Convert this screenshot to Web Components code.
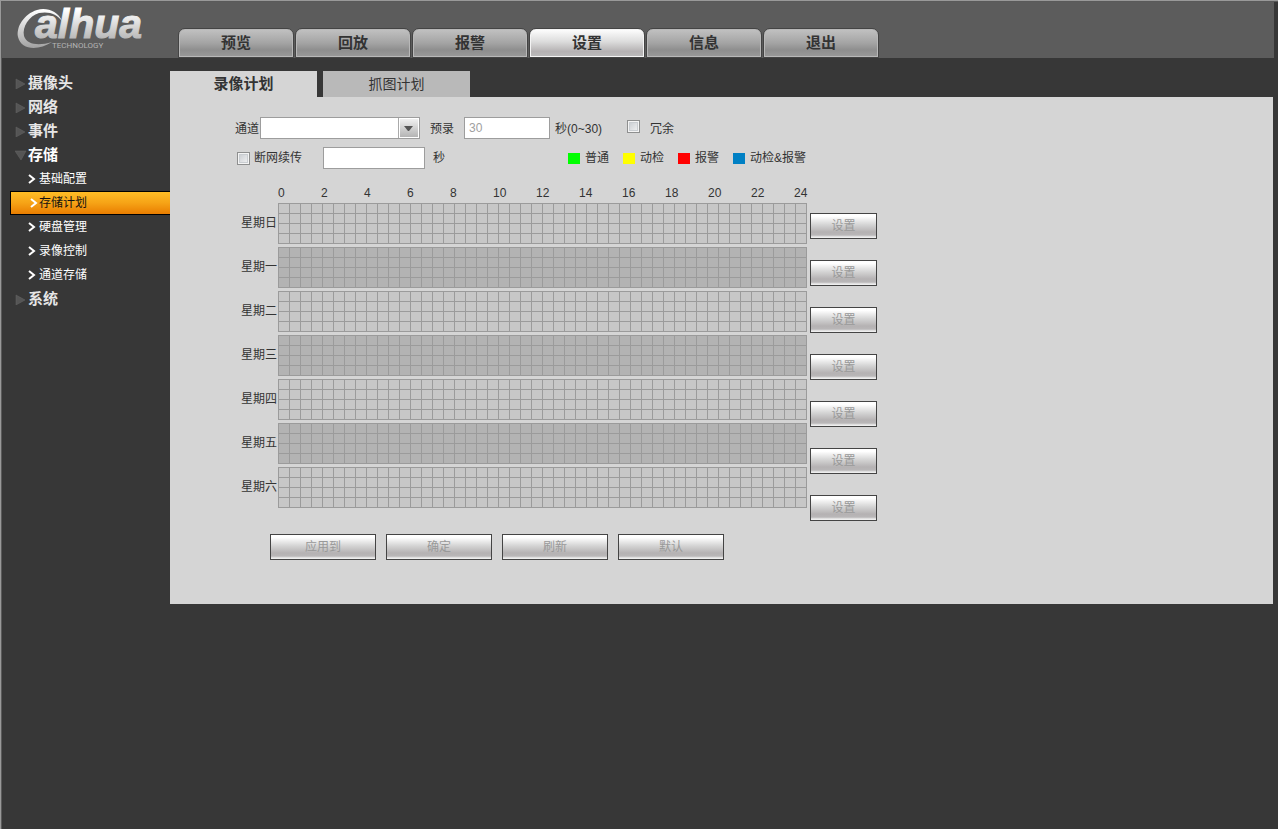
<!DOCTYPE html>
<html lang="zh-CN">
<head>
<meta charset="utf-8">
<title>存储计划</title>
<style>
  body {
    margin: 0;
    background: #fff;
    color: #333;
    font: 12px/16px "Liberation Sans", "Noto Sans CJK SC", sans-serif;
  }
</style>
</head>
<body>
<camera-app>
  <brand-logo slot="header"></brand-logo>
  <top-nav slot="header">
    <top-tab>预览</top-tab>
    <top-tab>回放</top-tab>
    <top-tab>报警</top-tab>
    <top-tab active>设置</top-tab>
    <top-tab>信息</top-tab>
    <top-tab>退出</top-tab>
  </top-nav>

  <side-menu slot="side">
    <menu-group label="摄像头"></menu-group>
    <menu-group label="网络"></menu-group>
    <menu-group label="事件"></menu-group>
    <menu-group label="存储" open>
      <menu-entry>基础配置</menu-entry>
      <menu-entry active>存储计划</menu-entry>
      <menu-entry>硬盘管理</menu-entry>
      <menu-entry>录像控制</menu-entry>
      <menu-entry>通道存储</menu-entry>
    </menu-group>
    <menu-group label="系统"></menu-group>
  </side-menu>

  <tab-panel>
    <panel-tab slot="tabs" active>录像计划</panel-tab>
    <panel-tab slot="tabs">抓图计划</panel-tab>
    <record-form></record-form>
    <week-schedule></week-schedule>
    <action-bar>
      <push-button wide>应用到</push-button>
      <push-button wide>确定</push-button>
      <push-button wide>刷新</push-button>
      <push-button wide>默认</push-button>
    </action-bar>
  </tab-panel>
</camera-app>

<script>
class CameraApp extends HTMLElement {
  constructor() {
    super();
    this.attachShadow({mode: 'open'}).innerHTML = `
      <style>
        :host {
          display: flex;
          flex-direction: column;
          box-sizing: border-box;
          min-height: calc(100vh - 2px);
          margin-right: 2px;
          border: solid #999;
          border-width: 1px 0 0 1px;
          background: #373737;
          box-shadow: inset 1px 1px #5a5a5a;
        }
        header {
          display: flex;
          align-items: flex-end;
          height: 56px;
          margin: 1px 4px 0 1px;
          background: #5c5c5c;
        }
        .body {
          display: flex;
          align-items: flex-start;
          padding: 13px 5px 0 1px;
        }
        main {
          flex: 1;
          min-width: 0;
        }
      </style>

      <header><slot name="header"></slot></header>
      <div class="body">
        <slot name="side"></slot>
        <main><slot></slot></main>
      </div>
    `;
  }
}

class BrandLogo extends HTMLElement {
  constructor() {
    super();
    this.attachShadow({mode: 'open'}).innerHTML = `
      <style>
        :host {
          display: block;
          align-self: flex-start;
          width: 176px;
        }
        svg {
          display: block;
        }
        .name {
          font: italic bold 41px "Liberation Sans", sans-serif;
        }
        .sub {
          font: 8px Roboto, "Liberation Sans", sans-serif;
        }
      </style>

      <svg width="160" height="52" viewBox="2 2 160 52" role="img" aria-label="alhua technology">
        <defs>
          <linearGradient id="metal" gradientUnits="userSpaceOnUse" x1="0" y1="10" x2="0" y2="48">
            <stop offset="0" stop-color="#fff"/>
            <stop offset="1" stop-color="#a2a2a2"/>
          </linearGradient>
        </defs>
        <g fill="url(#metal)">
          <path d="M62 21C58 11 46 7 37 10C24 14 16 27 18 37C21 50 38 51 52 42C39 46 27 45 24 36C22 27 29 16 39 13C49 11 57 14 62 21Z"/>
          <text class="name" x="35" y="38" stroke="url(#metal)">alhua</text>
        </g>
        <text class="sub" x="52" y="48" fill="#b4b4b4">TECHNOLOGY</text>
      </svg>
    `;
  }
}

class TopNav extends HTMLElement {
  constructor() {
    super();
    this.attachShadow({mode: 'open'}).innerHTML = `
      <style>
        :host {
          display: block;
        }
        nav {
          display: flex;
          gap: 1px;
        }
      </style>

      <nav><slot></slot></nav>
    `;
  }
}

class TopTab extends HTMLElement {
  constructor() {
    super();
    this.attachShadow({mode: 'open'}).innerHTML = `
      <style>
        :host {
          display: block;
        }
        a {
          display: block;
          box-sizing: border-box;
          width: 116px;
          height: 30px;
          border: 1px solid #444;
          border-radius: 7px 7px 0 0;
          background: linear-gradient(#c2c2c2, #a4a4a4 50%, #8e8e8e 75%, #999);
          box-shadow: inset 0 0 0 1px #b8b8b8;
          color: #333;
          font-size: 15px;
          font-weight: bold;
          line-height: 27px;
          text-align: center;
          text-decoration: none;
        }
        :host([active]) a {
          background: linear-gradient(#fff, #dcdcdc 45%, #b5b2b3 80%, #bbb);
          box-shadow: inset 0 0 0 1px #f4f4f4;
        }
      </style>

      <a href="#"><slot></slot></a>
    `;
  }
}

class SideMenu extends HTMLElement {
  constructor() {
    super();
    this.attachShadow({mode: 'open'}).innerHTML = `
      <style>
        :host {
          display: block;
          flex: none;
          width: 160px;
          padding-left: 8px;
        }
      </style>

      <nav><slot></slot></nav>
    `;
  }
}

class MenuGroup extends HTMLElement {
  constructor() {
    super();
    const open = this.hasAttribute('open');
    this.attachShadow({mode: 'open'}).innerHTML = `
      <style>
        :host {
          display: block;
        }
        a {
          display: flex;
          align-items: center;
          gap: 1px;
          height: 24px;
          padding-left: 5px;
          color: #e6e6e6;
          font-size: 15px;
          font-weight: bold;
          text-decoration: none;
        }
        :host([open]) a {
          color: #fff;
        }
      </style>

      <a href="#">
        <svg width="12" height="12">
          <path d="${open ? 'M0 2H11L6 11Z' : 'M1 2L10 7L1 12Z'}" fill="#555" stroke="#666" stroke-width="0.5"/>
        </svg>
        ${this.getAttribute('label')}
      </a>
      <slot></slot>
    `;
  }
}

class MenuEntry extends HTMLElement {
  constructor() {
    super();
    this.attachShadow({mode: 'open'}).innerHTML = `
      <style>
        :host {
          display: block;
        }
        a {
          display: flex;
          align-items: center;
          gap: 3px;
          box-sizing: border-box;
          height: 24px;
          padding-left: 17px;
          border: 1px solid transparent;
          border-right: 0;
          color: #fff;
          text-decoration: none;
        }
        :host([active]) a {
          border-color: #000;
          background: linear-gradient(#ffbd26, #f6a316 50%, #e97d00);
          background-clip: padding-box;
          color: #111;
        }
        svg {
          flex: none;
        }
        :host([active]) svg {
          padding-left: 2px;
          margin-right: -2px;
        }
      </style>

      <a href="#">
        <svg width="8" height="10"><path d="M1 1L6 5L1 9" fill="none" stroke="#fff" stroke-width="2"/></svg>
        <slot></slot>
      </a>
    `;
  }
}

class TabPanel extends HTMLElement {
  constructor() {
    super();
    this.attachShadow({mode: 'open'}).innerHTML = `
      <style>
        :host {
          display: block;
        }
        .tabs {
          display: flex;
          gap: 6px;
        }
        .content {
          padding: 20px 0 44px 65px;
          background: #d5d5d5;
        }
      </style>

      <div class="tabs"><slot name="tabs"></slot></div>
      <div class="content"><slot></slot></div>
    `;
  }
}

class PanelTab extends HTMLElement {
  constructor() {
    super();
    this.attachShadow({mode: 'open'}).innerHTML = `
      <style>
        :host {
          display: block;
        }
        button {
          display: block;
          width: 147px;
          height: 26px;
          padding: 0;
          border: 0;
          background: #b9b9b9;
          color: #333;
          font: inherit;
          font-size: 14px;
          line-height: 26px;
        }
        :host([active]) button {
          background: #d5d5d5;
          font-size: 15px;
          font-weight: bold;
        }
      </style>

      <button type="button"><slot></slot></button>
    `;
  }
}

class RecordForm extends HTMLElement {
  constructor() {
    super();
    this.attachShadow({mode: 'open'}).innerHTML = `
      <style>
        :host {
          display: block;
        }
        .row {
          display: flex;
          align-items: center;
          height: 22px;
          white-space: nowrap;
        }
        .row + .row {
          margin-top: 8px;
        }
        .row > label, .range {
          padding-top: 2px;
        }
        .offline {
          display: flex;
          align-items: center;
          width: 331px;
          padding-left: 2px;
        }
        .offline label {
          width: 69px;
        }
        input, select {
          box-sizing: border-box;
          height: 22px;
          margin: 0;
          padding: 0 4px;
          border: 1px solid #9d9d9d;
          border-radius: 0;
          background: #fff;
          color: #a0a0a0;
          font: inherit;
        }
        .select {
          position: relative;
          margin: 0 10px 0 1px;
        }
        select {
          display: block;
          width: 160px;
          appearance: none;
          opacity: 1;
        }
        .select svg {
          position: absolute;
          top: 1px;
          right: 1px;
          pointer-events: none;
        }
        #pre {
          width: 86px;
          margin: 0 5px 0 10px;
        }
        #delay {
          width: 102px;
          margin-right: 8px;
        }
        input[type=checkbox] {
          appearance: none;
          width: 13px;
          height: 13px;
          padding: 0;
          border-color: #8e8f8f;
          background: linear-gradient(135deg, #c4c8cd, #f6f6f6);
          box-shadow: inset 0 0 0 1px #f4f4f4, inset 0 0 0 2px #c9cdd1;
        }
        #extra {
          margin: 0 10px 3px 25px;
        }
        #resume {
          margin-right: 4px;
        }
      </style>

      <div class="row">
        <label for="channel">通道</label>
        <span class="select">
          <select id="channel" disabled></select>
          <svg width="21" height="20">
            <defs>
              <linearGradient id="shade" x2="0" y2="1">
                <stop offset="0" stop-color="#f0f0f0"/>
                <stop offset="1" stop-color="#b4b4b4"/>
              </linearGradient>
            </defs>
            <path d="M0 0H1V20H0Z" fill="#aaa"/>
            <rect x="2" y="1" width="18" height="18" fill="url(#shade)"/>
            <path d="M6 8H15L11 13H10Z" fill="#555"/>
          </svg>
        </span>
        <label for="pre">预录</label>
        <input id="pre" type="text" value="30" disabled>
        <span class="range">秒(0~30)</span>
        <input id="extra" type="checkbox" disabled>
        <label for="extra">冗余</label>
      </div>
      <div class="row">
        <div class="offline">
          <input id="resume" type="checkbox" disabled>
          <label for="resume">断网续传</label>
          <input id="delay" type="text" aria-labelledby="unit" disabled>
          <span id="unit">秒</span>
        </div>
        <color-legend></color-legend>
      </div>
    `;
  }
}

class ColorLegend extends HTMLElement {
  constructor() {
    super();
    const items = [['#0f0', '普通'], ['#ff0', '动检'], ['#f00', '报警'], ['#0080c4', '动检&amp;报警']];
    this.attachShadow({mode: 'open'}).innerHTML = `
      <style>
        :host {
          display: flex;
          gap: 14px;
        }
        span {
          display: flex;
          align-items: center;
          gap: 5px;
        }
        i {
          width: 12px;
          height: 11px;
        }
      </style>

      ${items.map(([color, text]) => `<span><i style="background: ${color}"></i>${text}</span>`).join('')}
    `;
  }
}

class WeekSchedule extends HTMLElement {
  constructor() {
    super();
    const days = ['日', '一', '二', '三', '四', '五', '六'];
    const hours = [...Array(13).keys()].map(i => i * 2);
    this.attachShadow({mode: 'open'}).innerHTML = `
      <style>
        :host {
          display: block;
          padding: 16px 0 0 6px;
        }
        .hours {
          display: flex;
          padding: 0 0 2px 37px;
        }
        .hours span {
          flex: none;
          width: 43px;
        }
        .week {
          display: flex;
          gap: 3px;
        }
        .days, .buttons {
          display: flex;
          flex-direction: column;
          gap: 3px;
        }
        .buttons {
          gap: 21px;
          padding-top: 10px;
        }
      </style>

      <div class="hours">${hours.map(h => `<span>${h}</span>`).join('')}</div>
      <div class="week">
        <div class="days">${days.map(d => `<schedule-day>星期${d}</schedule-day>`).join('')}</div>
        <div class="buttons">${days.map(() => '<push-button>设置</push-button>').join('')}</div>
      </div>
    `;
  }
}

class ScheduleDay extends HTMLElement {
  constructor() {
    super();
    this.attachShadow({mode: 'open'}).innerHTML = `
      <style>
        :host {
          --cell: #c7c7c7;
          display: flex;
          align-items: center;
        }
        :host(:nth-child(even)) {
          --cell: #b3b3b3;
        }
        .label {
          width: 37px;
          padding-bottom: 2px;
        }
        /* 48 half hours by 4 record types */
        .grid {
          width: 529px;
          height: 41px;
          background:
            repeating-linear-gradient(90deg, #9b9b9b 0 1px, transparent 1px 11px),
            repeating-linear-gradient(#9b9b9b 0 1px, transparent 1px 10px),
            var(--cell);
        }
      </style>

      <span class="label"><slot></slot></span>
      <div class="grid"></div>
    `;
  }
}

class PushButton extends HTMLElement {
  constructor() {
    super();
    this.attachShadow({mode: 'open'}).innerHTML = `
      <style>
        :host {
          display: block;
        }
        button {
          display: block;
          box-sizing: border-box;
          width: 67px;
          height: 26px;
          padding: 0;
          border: 1px solid #444;
          background: linear-gradient(#fff 10%, #d4d4d4 45%, #b5b2b3 75%, #b9b7b8 88%, #eee 96%);
          color: #999;
          font: inherit;
        }
        :host([wide]) button {
          width: 106px;
        }
      </style>

      <button type="button" disabled><slot></slot></button>
    `;
  }
}

class ActionBar extends HTMLElement {
  constructor() {
    super();
    this.attachShadow({mode: 'open'}).innerHTML = `
      <style>
        :host {
          display: flex;
          gap: 10px;
          padding: 13px 0 0 35px;
        }
      </style>

      <slot></slot>
    `;
  }
}

customElements.define('camera-app', CameraApp);
customElements.define('brand-logo', BrandLogo);
customElements.define('top-nav', TopNav);
customElements.define('top-tab', TopTab);
customElements.define('side-menu', SideMenu);
customElements.define('menu-group', MenuGroup);
customElements.define('menu-entry', MenuEntry);
customElements.define('tab-panel', TabPanel);
customElements.define('panel-tab', PanelTab);
customElements.define('push-button', PushButton);
customElements.define('color-legend', ColorLegend);
customElements.define('record-form', RecordForm);
customElements.define('schedule-day', ScheduleDay);
customElements.define('week-schedule', WeekSchedule);
customElements.define('action-bar', ActionBar);
</script>
</body>
</html>
